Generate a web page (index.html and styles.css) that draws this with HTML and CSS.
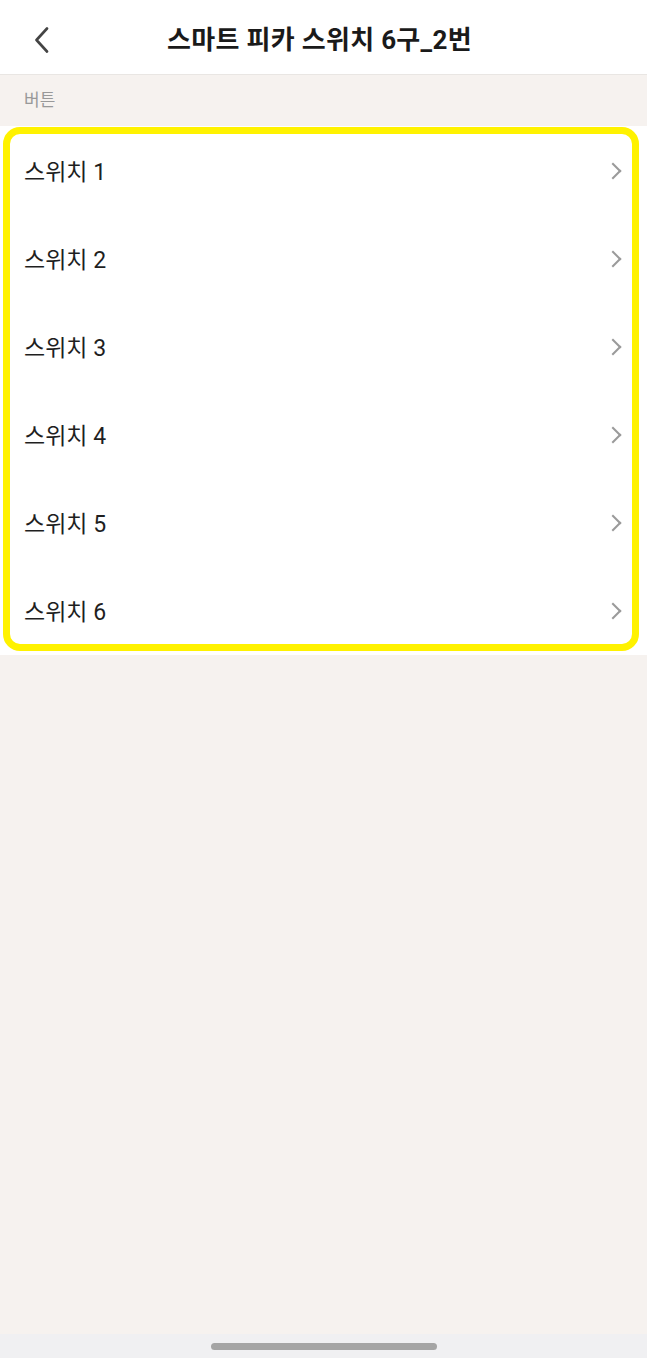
FILE: index.html
```html
<!DOCTYPE html>
<html lang="ko">
<head>
    <meta charset="UTF-8">
    <meta name="viewport" content="width=device-width, initial-scale=1.0">
    <title>스마트 피카 스위치 6구_2번</title>
    <link rel="stylesheet" href="styles.css">
</head>
<body>
    <div class="screen">
        <header class="topbar">
            <button class="back-btn" aria-label="뒤로">
                <svg width="16" height="26" viewBox="0 0 16 26">
                    <polyline points="13,1.5 2.5,13 13,24.5" fill="none" stroke="#444" stroke-width="2.6" stroke-linecap="round" stroke-linejoin="round"/>
                </svg>
            </button>
            <h1>스마트 피카 스위치 6구_2번</h1>
        </header>

        <div class="section-label">버튼</div>

        <!-- Switch list -->
        <div class="list">
            <div class="row"><span>스위치 1</span><i class="chev"></i></div>
            <div class="row"><span>스위치 2</span><i class="chev"></i></div>
            <div class="row"><span>스위치 3</span><i class="chev"></i></div>
            <div class="row"><span>스위치 4</span><i class="chev"></i></div>
            <div class="row"><span>스위치 5</span><i class="chev"></i></div>
            <div class="row"><span>스위치 6</span><i class="chev"></i></div>
            <div class="highlight"></div>
        </div>

        <div class="filler"></div>

        <div class="navbar"><div class="handle"></div></div>
    </div>
</body>
</html>
```

FILE: styles.css
```css
body {
    margin: 0;
    padding: 0;
    font-family: Roboto, "Noto Sans CJK KR", sans-serif;
    background: #f6f2ef;
    color: #222;
}

.screen {
    display: flex;
    flex-direction: column;
    height: 1358px;
}

.topbar {
    height: 74px;
    background: #fff;
    border-bottom: 1px solid #e9e6e3;
    display: flex;
    align-items: center;
    justify-content: center;
    position: relative;
}

.back-btn {
    position: absolute;
    left: 34px;
    top: 27px;
    padding: 0;
    border: none;
    background: none;
    line-height: 0;
}

.topbar h1 {
    margin: 0;
    font-size: 26px;
    font-weight: 700;
    color: #1a1a1a;
    letter-spacing: 0.3px;
    padding-right: 8px;
}

.section-label {
    height: 51px;
    line-height: 51px;
    padding-left: 24px;
    font-size: 17px;
    color: #999;
}

.list {
    background: #fff;
    padding: 1px 0 0;
    position: relative;
}

.row {
    height: 88px;
    display: flex;
    align-items: center;
    justify-content: space-between;
    padding: 0 28px 0 24px;
    font-size: 23px;
    color: #1f1f1f;
}

.row span {
    margin-top: -3px;
}

.chev {
    width: 10px;
    height: 10px;
    border-top: 2px solid #9a9a9a;
    border-right: 2px solid #9a9a9a;
    transform: rotate(45deg);
}

.highlight {
    position: absolute;
    top: 1px;
    left: 3px;
    width: 636px;
    height: 524px;
    box-sizing: border-box;
    border: 7px solid #fff200;
    border-radius: 17px;
    pointer-events: none;
}

.filler {
    flex: 1;
}

.navbar {
    height: 24px;
    background: #f0f0f2;
    display: flex;
    justify-content: center;
    padding-top: 9px;
    box-sizing: border-box;
}

.handle {
    width: 226px;
    height: 7px;
    border-radius: 4px;
    background: #a5a5a5;
}
```
